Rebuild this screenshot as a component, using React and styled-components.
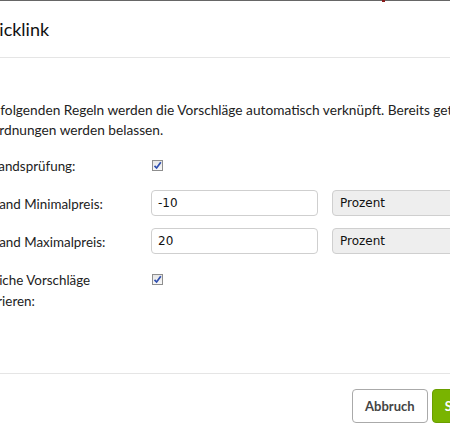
import React from "react";
import styled, { createGlobalStyle } from "styled-components";

const GlobalStyle = createGlobalStyle`
  html, body {
    margin: 0;
    padding: 0;
    background: #fff;
    overflow: hidden;
  }
  body {
    font-family: Lato, "Open Sans", sans-serif;
    color: #222;
  }
`;

const App = () => (
  <>
    <GlobalStyle />
    <Dialog>
      <Header>
        <Title>Quicklink</Title>
        <CloseMark />
      </Header>
      <Body>
        <Intro>
          Mit folgenden Regeln werden die Vorschläge automatisch verknüpft. Bereits getätigte
          <br />
          Zuordnungen werden belassen.
        </Intro>
        <Form>
          <Row>
            <Label>Bestandsprüfung:</Label>
            <Field>
              <Checkbox checked />
            </Field>
          </Row>
          <Row>
            <Label>Abstand Minimalpreis:</Label>
            <Field>
              <Input defaultValue="-10" />
              <Select>Prozent</Select>
            </Field>
          </Row>
          <Row>
            <Label>Abstand Maximalpreis:</Label>
            <Field>
              <Input defaultValue="20" />
              <Select>Prozent</Select>
            </Field>
          </Row>
          <Row>
            <Label>
              Ähnliche Vorschläge
              <br />
              ignorieren:
            </Label>
            <Field>
              <Checkbox checked />
            </Field>
          </Row>
        </Form>
      </Body>
      <Footer>
        <Button>Abbruch</Button>
        <Button primary>Speichern</Button>
      </Footer>
    </Dialog>
  </>
);

const Checkbox = ({ checked }) => (
  <Box>
    {checked && (
      <svg width="9" height="9" viewBox="0 0 9 9">
        <path
          d="M1.5 4.8 L3.6 7 L7.8 1.2"
          fill="none"
          stroke="#2f4fb0"
          strokeWidth="1.7"
        />
      </svg>
    )}
  </Box>
);

const Dialog = styled.div`
  position: relative;
  width: 583px;
  margin-left: -48px;
  border-top: 1px solid #666;
  background: #fff;
`;

const Header = styled.div`
  position: relative;
  display: flex;
  align-items: center;
  height: 56px;
  padding: 0 20px;
  border-bottom: 1px solid #e5e5e5;
`;

const Title = styled.h2`
  margin: 0 0 0 3px;
  font-size: 18px;
  font-weight: 400;
  color: #111;
`;

const CloseMark = styled.span`
  position: absolute;
  left: 430px;
  top: -1px;
  width: 3px;
  height: 2px;
  background: #8b1a1a;
`;

const Body = styled.div`
  padding: 42px 20px 62px;
`;

const Intro = styled.p`
  margin: 0;
  padding-left: 4px;
  font-size: 13.7px;
  line-height: 20px;
  white-space: nowrap;
  color: #222;
`;

const Form = styled.div`
  display: flex;
  flex-direction: column;
  gap: 12px;
  margin-top: 12px;
`;

const Row = styled.div`
  display: grid;
  grid-template-columns: 179px 1fr;
  min-height: 26px;
`;

const Label = styled.div`
  padding-top: 4px;
  font-size: 13.4px;
  line-height: 20.5px;
  color: #222;
`;

const Field = styled.div`
  display: flex;
  align-items: flex-start;
  gap: 14px;
`;

const Box = styled.span`
  display: flex;
  align-items: center;
  justify-content: center;
  box-sizing: border-box;
  width: 11px;
  height: 11px;
  margin: 8px 0 0 1px;
  border: 1px solid #8e8e8e;
  background: linear-gradient(#e6e6e6, #f8f8f8);
`;

const Input = styled.input`
  box-sizing: border-box;
  width: 167px;
  height: 26px;
  margin: 0;
  padding: 0 6px;
  border: 1px solid #cfcfcf;
  border-radius: 4px;
  font-family: "DejaVu Sans", Verdana, sans-serif;
  font-size: 12px;
  color: #111;
  outline: none;
`;

const Select = styled.div`
  display: flex;
  align-items: center;
  box-sizing: border-box;
  width: 160px;
  height: 26px;
  padding: 0 7px;
  border: 1px solid #cfcfcf;
  border-radius: 4px;
  background: #eee;
  font-family: "DejaVu Sans", Verdana, sans-serif;
  font-size: 12px;
  color: #111;
`;

const Footer = styled.div`
  display: flex;
  justify-content: flex-end;
  gap: 4px;
  padding: 15px 20px 15px;
  border-top: 1px solid #e5e5e5;
`;

const Button = styled.button`
  height: 34px;
  padding: 0 12px;
  border: 1px solid ${(p) => (p.primary ? "#6a9e00" : "#aaa")};
  border-radius: 4px;
  background: ${(p) => (p.primary ? "#79b400" : "#fff")};
  color: ${(p) => (p.primary ? "#fff" : "#444")};
  font-family: Lato, "Open Sans", sans-serif;
  font-size: 13px;
  font-weight: 700;
`;

export default App;
